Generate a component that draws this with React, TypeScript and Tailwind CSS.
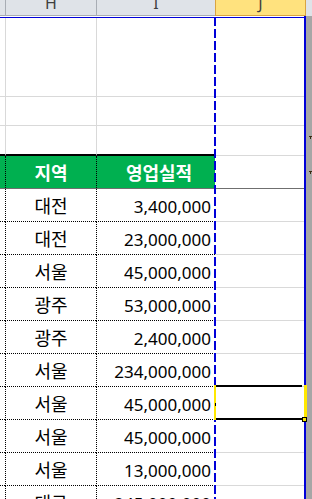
import React from "react"

// 지역별 영업실적 sheet, page-break preview (columns H–J)
const rows: [string, string][] = [
  ["대전", "3,400,000"],
  ["대전", "23,000,000"],
  ["서울", "45,000,000"],
  ["광주", "53,000,000"],
  ["광주", "2,400,000"],
  ["서울", "234,000,000"],
  ["서울", "45,000,000"],
  ["서울", "45,000,000"],
  ["서울", "13,000,000"],
  ["대구", "245,000,000"],
]

function TopRow({ h }: { h: string }) {
  // plain gridline rows above the table
  return (
    <div className="flex">
      <div className={`w-[5px] ${h} border-b border-[#d9d9d9]`} />
      <div className={`w-[91px] ${h} border-l border-b border-[#d9d9d9]`} />
      <div className={`w-[119px] ${h} border-l border-b border-[#d9d9d9]`} />
      <div className={`w-[89px] ${h} border-b border-[#d9d9d9]`} />
    </div>
  )
}

export default function App() {
  return (
    <div className="relative w-[312px] h-[499px] overflow-hidden bg-white font-['Noto_Sans','Noto_Sans_CJK_KR',sans-serif]">
      {/* column letters */}
      <div className="flex h-[16px] bg-[#dfe3e8] text-[16px] leading-[6px] text-[#3f3f3f]">
        <div className="w-[5px] border-b border-[#a8adb4]" />
        <div className="w-[91px] border-l border-b border-[#a8adb4] text-center">H</div>
        <div className="w-[119px] border-l border-b border-[#a8adb4] text-center">I</div>
        <div className="w-[91px] bg-[#ffe27e] border-x border-b border-[#d9a441] text-center">J</div>
        <div className="flex-1" />
      </div>

      <div className="flex">
        {/* print area */}
        <div className="w-[304px]">
          <div className="h-px bg-white" />
          <div className="h-px bg-[#0000d8]" />

          <TopRow h="h-[79px]" />
          <TopRow h="h-[29px]" />
          <div className="flex">
            <div className="w-[5px] h-[30px] border-b-2 border-black" />
            <div className="w-[91px] h-[30px] border-l border-[#d9d9d9] border-b-2 border-b-black" />
            <div className="w-[119px] h-[30px] border-l border-[#d9d9d9] border-b-2 border-b-black" />
            <div className="w-[89px] h-[30px] border-b border-[#d9d9d9]" />
          </div>

          {/* table header */}
          <div className="flex h-[33px] border-b border-[#6f6f6f] text-[18px] font-bold text-white">
            <div className="w-[5px] bg-[#00b050]" />
            <div className="w-[91px] bg-[#00b050] border-l border-dotted border-black flex items-center justify-center pt-[3px]">
              지역
            </div>
            <div className="w-[119px] bg-[#00b050] border-l border-dotted border-black flex items-center justify-center pl-[6px] pt-[3px]">
              영업실적
            </div>
            <div className="w-[89px]" />
          </div>

          {rows.map(([region, amount], i) => (
            <div key={i} className="flex h-[33px] text-black">
              <div className="w-[5px] border-b border-dotted border-black" />
              <div className="w-[91px] border-l border-b border-dotted border-black flex items-center justify-center pt-[3px] text-[18px]">
                {region}
              </div>
              <div className="w-[119px] border-l border-b border-dotted border-black flex items-center justify-end pr-[4px] pt-[3px] text-[17px]">
                {amount}
              </div>
              <div className="w-[89px] border-b border-[#d9d9d9]" />
            </div>
          ))}
        </div>

        {/* print area edge */}
        <div className="w-[3px] h-[483px] bg-[#0000d8]" />
        <div className="flex-1 h-[483px] bg-[#a6a6a6] flex flex-col">
          <div className="h-[120px]" />
          <div className="ml-[3px] w-[3px] h-px bg-[#3b2a12]" />
          <div className="ml-[4px] w-px h-[2px] bg-[#3b2a12]" />
          <div className="h-[32px]" />
          <div className="ml-[3px] w-[3px] h-px bg-[#3b2a12]" />
          <div className="ml-[4px] w-px h-[2px] bg-[#3b2a12]" />
        </div>
      </div>

      {/* automatic page break */}
      <div className="absolute left-[214px] top-[17px] w-[2px] h-[482px] bg-[repeating-linear-gradient(to_bottom,#0000d8_0px,#0000d8_9px,transparent_9px,transparent_12px)]" />

      {/* active cell J */}
      <div className="absolute left-[214px] top-[385px] w-[93px] h-[35px] border-l-2 border-r-[3px] border-[#ffe800] flex flex-col justify-between">
        <div className="h-[2px] bg-black mr-[2px]" />
        <div className="h-[2px] bg-black mr-[2px]" />
      </div>
      <div className="absolute left-[215px] top-[403px] w-px h-[3px] bg-black" />
      <div className="absolute left-[302px] top-[417px] w-[5px] h-[5px] border border-black bg-[#ffe800]" />
    </div>
  )
}
